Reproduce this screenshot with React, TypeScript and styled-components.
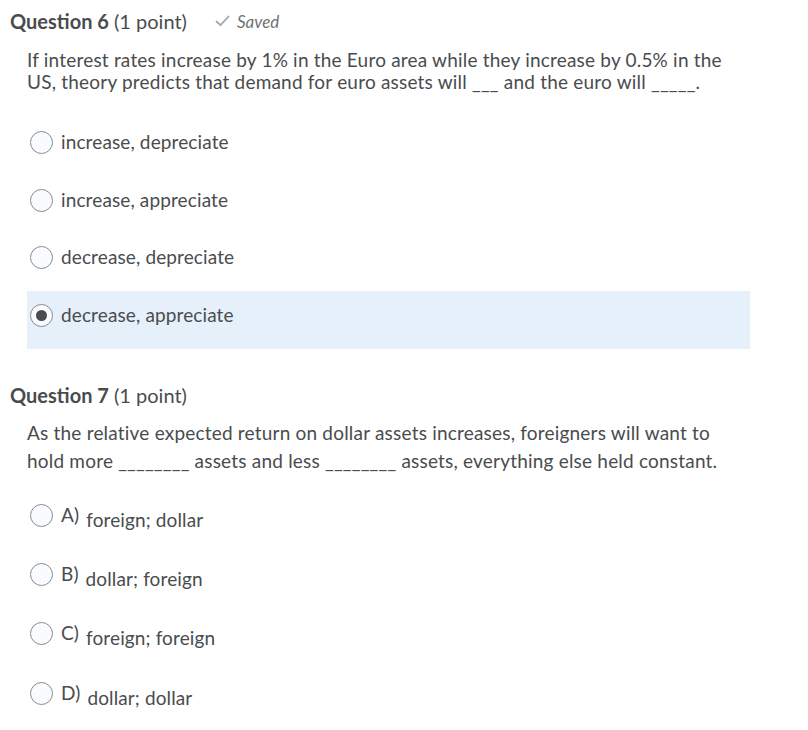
import React from "react";
import styled, { createGlobalStyle } from "styled-components";

const Global = createGlobalStyle`
  html, body { margin: 0; padding: 0; background: #ffffff; }
  body { font-family: Lato, "Open Sans", sans-serif; color: #494c4e; }
`;

const Page = styled.div`
  width: 808px;
  padding: 8px 0 0 10px;
  box-sizing: border-box;
`;

const Header = styled.div`
  display: flex;
  align-items: center;
  height: 26px;
`;

const Title = styled.h2`
  margin: 0;
  font-size: 20px;
  line-height: 26px;
  font-weight: 400;
  color: #494c4e;
  b { font-weight: 700; }
`;

const Saved = styled.span`
  margin-left: 28px;
  font-size: 17px;
  font-style: italic;
  color: #6e7376;
  display: inline-flex;
  align-items: center;
  gap: 7px;
`;

const Body = styled.div<{ $top: number }>`
  padding: ${(p) => p.$top}px 0 0 17px;
`;

const Prompt = styled.p<{ $lh: number }>`
  margin: 0;
  font-size: 19px;
  letter-spacing: 0.2px;
  line-height: ${(p) => p.$lh}px;
  color: #494c4e;
  width: 712px;
`;

const Options = styled.div<{ $top: number; $bottom: number }>`
  display: flex;
  flex-direction: column;
  width: 723px;
  padding: ${(p) => p.$top}px 0 ${(p) => p.$bottom}px;
`;

const Option = styled.label<{ $selected?: boolean; $h: number }>`
  display: flex;
  align-items: flex-start;
  box-sizing: border-box;
  height: ${(p) => p.$h}px;
  padding: 13px 0 0 3px;
  background: ${(p) => (p.$selected ? "#e6f0fa" : "transparent")};
  font-size: 19px;
  letter-spacing: 0.12px;
  line-height: 22px;
  color: #494c4e;
`;

const Radio = styled.span<{ $checked?: boolean }>`
  width: 23px;
  height: 23px;
  border-radius: 50%;
  border: 1px solid #868c8f;
  background: #f9fbff;
  box-sizing: border-box;
  display: inline-flex;
  align-items: center;
  justify-content: center;
  margin-right: 8px;
  flex: none;
  &::after {
    content: "";
    width: 11px;
    height: 11px;
    border-radius: 50%;
    background: #494c4e;
    display: ${(p) => (p.$checked ? "block" : "none")};
  }
`;

const Letter = styled.span`
  margin-right: 7px;
`;

const OptText = styled.span<{ $shift?: number }>`
  position: relative;
  top: ${(p) => p.$shift || 0}px;
`;

const Check = () => (
  <svg width="15" height="12" viewBox="0 0 15 12">
    <path d="M1.5 6.5 L5.5 10.2 L13.5 1.5" fill="none" stroke="#a4a8ab" strokeWidth="1.8" strokeLinecap="round" strokeLinejoin="round" />
  </svg>
);

const q6 = ["increase, depreciate", "increase, appreciate", "decrease, depreciate", "decrease, appreciate"];
const q7: [string, string][] = [
  ["A)", "foreign; dollar"],
  ["B)", "dollar; foreign"],
  ["C)", "foreign; foreign"],
  ["D)", "dollar; dollar"],
];

export default function App() {
  return (
    <>
      <Global />
      <Page>
        <Header>
          <Title>
            <b>Question 6</b> (1 point)
          </Title>
          <Saved>
            <Check />
            Saved
          </Saved>
        </Header>
        <Body $top={15}>
          <Prompt $lh={22}>
            If interest rates increase by 1% in the Euro area while they increase by 0.5% in the US, theory predicts
            that demand for euro assets will ___ and the euro will _____.
          </Prompt>
          <Options $top={25} $bottom={33}>
            {q6.map((t, i) => (
              <Option key={t} $h={57.7} $selected={i === 3}>
                <Radio $checked={i === 3} />
                <OptText>{t}</OptText>
              </Option>
            ))}
          </Options>
        </Body>
        <Header>
          <Title>
            <b>Question 7</b> (1 point)
          </Title>
        </Header>
        <Body $top={11}>
          <Prompt $lh={28}>
            As the relative expected return on dollar assets increases, foreigners will want to hold more ________
            assets and less ________ assets, everything else held constant.
          </Prompt>
          <Options $top={16} $bottom={0}>
            {q7.map(([l, t]) => (
              <Option key={l} $h={59.3}>
                <Radio />
                <Letter>{l}</Letter>
                <OptText $shift={5}>{t}</OptText>
              </Option>
            ))}
          </Options>
        </Body>
      </Page>
    </>
  );
}
